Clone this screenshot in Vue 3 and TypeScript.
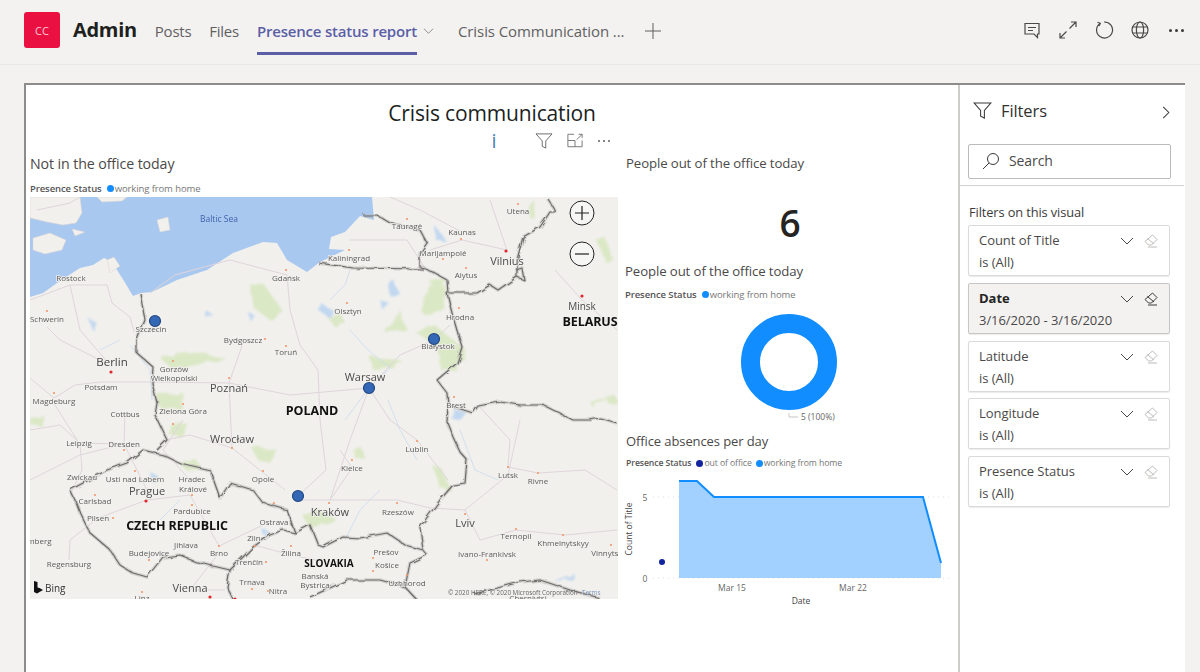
<script setup lang="ts">
interface MapLabel { t: string; x: number; y: number; k?: string }
const filters = [
  { name: 'Count of Title', value: 'is (All)', active: false },
  { name: 'Date', value: '3/16/2020 - 3/16/2020', active: true },
  { name: 'Latitude', value: 'is (All)', active: false },
  { name: 'Longitude', value: 'is (All)', active: false },
  { name: 'Presence Status', value: 'is (All)', active: false },
]
const sea = 'M30 197H372L374 220L360 216L345 232L331 237L329 249L345 250L320 262L307 272L287 260L277 243L263 242L233 253L207 270L177 280L152 292L141 293L133 296L124 281L112 262L104 258L93 265L80 268L57 283L43 293L30 297Z'
const land = [
  'M30 197H80L82 213L76 223L63 225L47 222L30 218Z',
  'M33 238L50 233L66 240L62 250L45 254L33 250Z',
  'M72 229L85 232L75 236Z',
  'M157 220L168 217L170 230L160 232Z',
  'M107 260L114 257L120 266L110 273Z',
  'M97 197H127L122 201L102 202Z',
]
const greens = [
  'M250 285L262 282L284 312L270 320L254 308Z',
  'M160 358L190 352L226 358L205 364L172 369Z',
  'M155 395L184 394L182 408L160 408Z',
  'M170 425L188 422L182 436L168 434Z',
  'M252 447L278 450L270 463L258 460Z',
  'M430 280L446 280L445 308L426 316L420 310Z',
  'M416 332L436 326L468 352L456 370L440 370L438 348Z',
  'M370 358L402 360L394 368L372 370Z',
  'M384 333L394 324L400 310L406 330Z',
  'M597 240L604 236L613 260L605 262Z',
  'M590 402L610 396L592 406Z',
  'M302 515L320 510L338 520L310 528Z',
  'M432 465L443 470L452 492L440 488Z',
  'M352 450L362 448L364 458L354 457Z',
  'M178 463L196 460L202 468L186 470Z',
  'M527 206L536 202L533 218L529 217Z',
  'M326 316L342 314L346 324L336 328Z',
  'M30 417L44 415L43 426L30 425Z',
  'M606 398L617 397L617 402L607 403Z',
]
const lakes = [
  'M88 318L96 322L92 330Z', 'M388 285L392 278L398 292L390 296Z', 'M322 304L333 310L328 316L320 312Z',
  'M205 310L212 314L206 318Z', 'M248 312L256 316L250 322Z', 'M455 410L468 412L461 422L452 419Z',
  'M555 582L575 574L572 580Z', 'M262 530L270 532L266 538Z', 'M150 472L158 476L152 482Z',
  'M435 225L445 240L436 240Z', 'M380 300L390 304L383 310Z',
]
const roads = [
  'M37 210L70 203L80 197',
  'M30 300L70 285L107 285L112 303L130 317L134 332',
  'M70 285L80 330L110 365',
  'M47 327L60 340L90 355L112 367',
  'M30 378L54 398L75 385L100 382L150 382L229 383L290 395L369 388',
  'M150 293L175 275L230 260L287 275',
  'M287 275L290 310L300 345L318 370L320 420L326 470L298 496',
  'M243 343L229 383L232 448L285 490',
  'M369 388L400 355L434 340L450 325',
  'M369 388L390 420L417 440L448 480',
  'M369 388L350 440L330 500',
  'M298 500L329 500L397 500L430 508L465 510L480 540L516 530L565 535L617 530',
  'M508 467L538 473L585 470L617 490',
  'M465 510L508 475L520 420',
  'M147 500L190 495L219 546L263 525',
  'M147 500L98 518L70 540L69 560',
  'M124 444L80 455L30 480',
  'M125 414L124 444L147 490',
  'M124 444L79 443L55 405',
  'M183 420L163 450L190 480',
  'M232 448L190 435L165 440',
  'M507 250L462 240L430 250',
  'M507 250L490 200',
  'M462 232L420 210L390 197',
  'M555 270L582 300L617 330',
  'M349 240L407 240L425 268',
  'M219 553L190 590L225 590',
  'M254 545L291 555L340 565',
  'M340 450L352 468L330 500',
  'M30 430L60 425L80 443L82 470L70 495',
  'M478 405L510 440L508 467',
]
const rivers = [
  'M350 330L368 350L390 368L369 388L345 420',
  'M417 460L400 430L388 400',
  'M330 300L345 285L350 270',
  'M130 345L150 370L152 400',
  'M100 350L120 340',
  'M460 430L475 470L498 480',
  'M345 540L360 510L380 490',
  'M160 520L180 500',
]
const borders = [
  'M140 293L145 320L137 340L137 353L153 367L152 383L157 403L155 415L167 440L157 450',
  'M70 490L75 500L80 513L90 533L110 550L120 565L133 573L147 577L163 557L180 555L200 563L230 570L253 547L270 535L283 530L295 533L287 510L263 503L253 490L230 483L220 498L210 470L180 463L163 455L143 450L127 463L107 470L85 482L70 490',
  'M295 533L310 525L318 545L323 547L343 537L360 538L387 533L405 545L423 550L427 555',
  'M427 555L410 563L405 587L417 600',
  'M230 570L227 587L233 599',
  'M310 597L330 588L347 580L380 580L405 587',
  'M448 405L447 422L453 437L460 452L467 460L465 483L453 485L440 500L420 527L423 550',
  'M473 413L478 406L500 402L520 405L543 405L573 420L590 420L600 418L617 423',
  'M448 405L473 413',
  'M447 293L453 317L462 347L457 363L437 380L447 393L448 405',
  'M425 268L447 280L448 293L477 293L490 285L498 290L517 277L517 260L523 237L540 227L550 212L556 212L547 198',
  'M318 263L353 268L423 269',
  'M363 215L377 215L390 223L420 230L427 243L420 253L420 267L425 268',
  'M517 277L524 280L522 268L516 270',
  'M474 594L490 590L520 582L540 580L570 590L600 598',
]
const labels: MapLabel[] = [
  { t: 'Baltic Sea', x: 219, y: 222, k: 'sea-l' },
  { t: 'Rostock', x: 71, y: 281 }, { t: 'Gdańsk', x: 286, y: 281 }, { t: 'Schwerin', x: 47, y: 322 },
  { t: 'Szczecin', x: 151, y: 332 }, { t: 'Bydgoszcz', x: 243, y: 343 }, { t: 'Toruń', x: 286, y: 355 },
  { t: 'Berlin', x: 112, y: 366, k: 'big' }, { t: 'Gorzów', x: 174, y: 372 }, { t: 'Wielkopolski', x: 174, y: 381 },
  { t: 'Poznań', x: 229, y: 392, k: 'mid' }, { t: 'Potsdam', x: 101, y: 390 }, { t: 'Magdeburg', x: 54, y: 404 },
  { t: 'Zielona Góra', x: 183, y: 414 }, { t: 'Cottbus', x: 125, y: 417 }, { t: 'Leipzig', x: 79, y: 446 },
  { t: 'Dresden', x: 124, y: 447 }, { t: 'Wrocław', x: 232, y: 443, k: 'mid' }, { t: 'Zwickau', x: 82, y: 480 },
  { t: 'Usti nad Labem', x: 135, y: 482 }, { t: 'Hradec', x: 192, y: 482 }, { t: 'Králové', x: 193, y: 492 },
  { t: 'Opole', x: 263, y: 482 }, { t: 'Prague', x: 147, y: 495, k: 'mid' }, { t: 'Carlsbad', x: 95, y: 504 },
  { t: 'Pardubice', x: 192, y: 514 }, { t: 'Pilsen', x: 98, y: 521 }, { t: 'Ostrava', x: 274, y: 525 },
  { t: 'Zlin', x: 254, y: 541 }, { t: 'Jihlava', x: 186, y: 548 }, { t: 'Brno', x: 219, y: 556 },
  { t: 'Budejovice', x: 149, y: 556 }, { t: 'Regensburg', x: 69, y: 567 }, { t: 'Trenčín', x: 249, y: 565 },
  { t: 'Žilina', x: 291, y: 556 }, { t: 'Vienna', x: 190, y: 592, k: 'mid' }, { t: 'Trnava', x: 252, y: 585 },
  { t: 'Nitra', x: 278, y: 594 }, { t: 'Nuremberg', x: 30, y: 544 }, { t: 'Utena', x: 518, y: 214 },
  { t: 'Tauragė', x: 407, y: 229 }, { t: 'Kaunas', x: 462, y: 235 }, { t: 'Marijampolė', x: 443, y: 256 },
  { t: 'Vilnius', x: 507, y: 265, k: 'mid' }, { t: 'Kaliningrad', x: 349, y: 261 }, { t: 'Alytus', x: 466, y: 278 },
  { t: 'Minsk', x: 582, y: 310, k: 'mid2' }, { t: 'Olsztyn', x: 348, y: 314 }, { t: 'Hrodna', x: 460, y: 320 },
  { t: 'Białystok', x: 438, y: 349 }, { t: 'Warsaw', x: 365, y: 381, k: 'mid' }, { t: 'Brest', x: 456, y: 408 },
  { t: 'Lublin', x: 417, y: 452 }, { t: 'Kielce', x: 352, y: 471 }, { t: 'Lutsk', x: 508, y: 478 },
  { t: 'Rivne', x: 538, y: 484 }, { t: 'Kraków', x: 330, y: 516, k: 'mid' }, { t: 'Rzeszów', x: 398, y: 515 },
  { t: 'Lviv', x: 465, y: 527, k: 'mid' }, { t: 'Ternopil', x: 516, y: 539 }, { t: 'Khmelnytskyy', x: 563, y: 546 },
  { t: 'Vinnytsia', x: 608, y: 556 }, { t: 'Ivano-Frankivsk', x: 487, y: 557 }, { t: 'Prešov', x: 386, y: 555 },
  { t: 'Košice', x: 387, y: 568 }, { t: 'Banská', x: 315, y: 579 }, { t: 'Bystrica', x: 315, y: 588 },
  { t: 'Uzhhorod', x: 407, y: 586 }, { t: 'Chernivtsi', x: 528, y: 601 }, { t: 'Linz', x: 142, y: 601 },
  { t: 'POLAND', x: 312, y: 415, k: 'country' }, { t: 'CZECH REPUBLIC', x: 177, y: 530, k: 'country' },
  { t: 'BELARUS', x: 590, y: 326, k: 'country' }, { t: 'SLOVAKIA', x: 329, y: 567, k: 'country-s' },
]
const dots = [
  [286, 270], [47, 311], [265, 339], [286, 346], [173, 361], [229, 378], [54, 393], [183, 404], [232, 448],
  [263, 471], [135, 471], [95, 495], [192, 505], [192, 495], [113, 518], [274, 503], [255, 546], [219, 546],
  [149, 560], [291, 546], [266, 562], [252, 589], [268, 591], [142, 592], [518, 204], [407, 219], [461, 239],
  [443, 259], [349, 250], [466, 268], [347, 303], [459, 308], [454, 397], [417, 441], [352, 460], [508, 467],
  [538, 473], [329, 503], [397, 503], [465, 514], [516, 529], [563, 535], [611, 545], [487, 560], [373, 558],
  [373, 571], [407, 575], [173, 424], [124, 450],
]
const redDots = [[111, 372], [146, 501], [210, 597], [235, 599], [506, 251], [582, 296]]
const markers = [[155, 321], [434, 339], [369, 388], [298, 496]]
</script>

<template>
  <div class="page">
    <header class="topbar">
      <div class="avatar">CC</div>
      <div class="team">Admin</div>
      <nav class="tabs">
        <span class="tab">Posts</span>
        <span class="tab">Files</span>
        <span class="tab active">Presence status report<i class="bar"></i></span>
        <svg class="tab-chev" viewBox="0 0 12 8"><path d="M1 1.5l5 5 5-5" /></svg>
        <span class="tab crisis">Crisis Communication ...</span>
        <svg class="plus" viewBox="0 0 16 16"><path d="M8 0v16M0 8h16" /></svg>
      </nav>
      <div class="actions">
        <svg viewBox="0 0 20 20"><path d="M3 3.500h14v10.500h-1.500v3.500l-3.500-3.500H3zM6 7.500h8M6 10.500h5" /></svg>
        <svg viewBox="0 0 20 20"><path d="M11.500 8.500L18 2M13 2h5v5M8.500 11.500L2 18M2 13v5h5" /></svg>
        <svg viewBox="0 0 20 20"><path d="M6 3.400A8 8 0 1 0 10 2M3.500 2.200L6.300 3.300 5 6" /></svg>
        <svg viewBox="0 0 20 20"><circle cx="10" cy="10" r="8" /><ellipse cx="10" cy="10" rx="3.600" ry="8" /><path d="M2.600 7h14.800M2.600 13h14.800" /></svg>
        <span class="more"><i></i><i></i><i></i></span>
      </div>
    </header>

    <main class="stage">
      <section class="report">
        <div class="canvas">
          <h1 class="title">Crisis communication</h1>
          <div class="vis-head">
            <span class="info">i</span>
            <svg class="vh-filter" viewBox="0 0 20 18"><path d="M1 1h18l-7 8v8l-4-2V9z" /></svg>
            <svg class="vh-expand" viewBox="0 0 18 16"><path d="M8 1H1v14h16V8M1 8h8v7M11 7l6-6M13 1h4v4" /></svg>
            <span class="vh-more"><i></i><i></i><i></i></span>
          </div>
          <div class="columns">
            <div class="col-map">
              <h2 class="v-title map-title">Not in the office today</h2>
              <div class="legend">
                <b>Presence Status</b><i class="dot light"></i><span>working from home</span>
              </div>
              <div class="map">
                <svg class="map-svg" viewBox="30 197 588 402">
                  <defs>
                    <filter id="wiggle" x="-5%" y="-5%" width="110%" height="110%">
                      <feTurbulence type="fractalNoise" baseFrequency="0.09" numOctaves="2" seed="4" />
                      <feDisplacementMap in="SourceGraphic" scale="5" />
                    </filter>
                    <filter id="soft" x="-10%" y="-10%" width="120%" height="120%">
                      <feTurbulence type="fractalNoise" baseFrequency="0.08" numOctaves="2" seed="9" />
                      <feDisplacementMap in="SourceGraphic" scale="8" />
                      <feGaussianBlur stdDeviation=".8" />
                    </filter>
                  </defs>
                  <rect x="30" y="197" width="588" height="402" fill="#f1f0ed" />
                  <path :d="sea" fill="#a9c8ef" />
                  <g class="coast">
                    <path v-for="(d, i) in land" :key="'l' + i" :d="d" fill="#f1f0ed" stroke="#d8d3d0" stroke-width=".5" />
                  </g>
                  <g class="soft">
                    <path v-for="(d, i) in greens" :key="'g' + i" :d="d" fill="#dbe8c6" />
                    <path v-for="(d, i) in lakes" :key="'k' + i" :d="d" fill="#c2d8f0" />
                  </g>
                  <path v-for="(d, i) in rivers" :key="'v' + i" :d="d" class="river" />
                  <path v-for="(d, i) in roads" :key="'r' + i" :d="d" class="road" />
                  <g class="wiggle">
                    <path v-for="(d, i) in borders" :key="'h' + i" :d="d" class="halo" />
                    <path v-for="(d, i) in borders" :key="'b' + i" :d="d" class="border" />
                  </g>
                  <circle v-for="(p, i) in dots" :key="'d' + i" :cx="p[0]" :cy="p[1]" r="1.100" fill="#f0986a" />
                  <circle v-for="(p, i) in redDots" :key="'e' + i" :cx="p[0]" :cy="p[1]" r="1.600" fill="#e0262c" />
                  <text v-for="l in labels" :key="l.t" :x="l.x" :y="l.y" class="ml" :class="l.k">{{ l.t }}</text>
                  <circle v-for="(p, i) in markers" :key="'m' + i" :cx="p[0]" :cy="p[1]" r="5.500" class="marker" />
                  <g class="zoomer">
                    <circle cx="582" cy="213" r="12" /><path d="M575 213h14M582 206v14" />
                    <circle cx="582" cy="254" r="12" /><path d="M575 254h14" />
                  </g>
                  <path d="M34 581v11l3 1.500 6-3.500-3.500-2-2-.5V582z" fill="#111" />
                  <text x="45" y="592" class="bing">Bing</text>
                  <text x="448" y="595" class="copy">© 2020 HERE, © 2020 Microsoft Corporation</text>
                  <text x="582" y="595" class="copy terms">Terms</text>
                </svg>
              </div>
            </div>

            <div class="col-side">
              <h2 class="v-title side-first">People out of the office today</h2>
              <div class="big-num">6</div>
              <h2 class="v-title side-second">People out of the office today</h2>
              <div class="legend second">
                <b>Presence Status</b><i class="dot light"></i><span>working from home</span>
              </div>
              <svg class="donut" viewBox="0 0 324 114">
                <circle cx="163" cy="51" r="38.500" />
                <path class="leader" d="M163 102v4h9" />
                <text x="175" y="109">5 (100%)</text>
              </svg>
              <h2 class="v-title side-third">Office absences per day</h2>
              <div class="legend third">
                <b>Presence Status</b><i class="dot navy"></i><span>out of office</span><i class="dot light"></i><span>working from home</span>
              </div>
              <svg class="area" viewBox="625 472 330 136">
                <path class="grid" d="M653 497H952M653 578H952" />
                <path class="fill" d="M679 481H697L714 497H923L941 563V578H679Z" />
                <path class="line" d="M679 481H697L714 497H923L941 563" />
                <circle cx="662" cy="562" r="3" fill="#12239e" />
                <text x="645" y="500.500" class="tick">5</text>
                <text x="645" y="581.500" class="tick">0</text>
                <text x="732" y="591" class="tick">Mar 15</text>
                <text x="853" y="591" class="tick">Mar 22</text>
                <text x="801" y="604" class="axis">Date</text>
                <text x="632" y="529" class="axis" transform="rotate(-90 632 529)">Count of Title</text>
              </svg>
            </div>
          </div>
        </div>

        <aside class="filters">
          <div class="f-head">
            <svg class="f-funnel" viewBox="0 0 20 18"><path d="M1 1h18l-7 8v8l-4-2V9z" /></svg>
            <span class="f-title">Filters</span>
            <svg class="f-chev" viewBox="0 0 8 14"><path d="M1 1l6 6-6 6" /></svg>
          </div>
          <div class="f-search-wrap">
            <div class="f-search">
              <svg viewBox="0 0 18 18"><circle cx="11" cy="7" r="5.500" /><path d="M7 11l-6 6" /></svg>
              <span>Search</span>
            </div>
          </div>
          <div class="f-list">
            <div class="f-sub">Filters on this visual</div>
            <div v-for="f in filters" :key="f.name" class="f-card" :class="{ on: f.active }">
              <div class="f-text">
                <div class="f-name">{{ f.name }}</div>
                <div class="f-val">{{ f.value }}</div>
              </div>
              <svg class="f-down" viewBox="0 0 14 8"><path d="M1 1l6 6 6-6" /></svg>
              <svg class="f-erase" viewBox="0 0 14 14"><path d="M8.500 1L13 5.500 7.500 11H4.500L1 7.500zM3.500 4.500L10 10M4 13h9" /></svg>
            </div>
          </div>
        </aside>
      </section>
    </main>
  </div>
</template>

<style>
html, body { margin: 0; background: #f3f2f1; }
</style>

<style scoped>
.page { width: 1200px; height: 672px; overflow: hidden; display: flex; flex-direction: column; background: #f3f2f1; font-family: "Open Sans", "Noto Sans", sans-serif; color: #3b3a39; }
.topbar { height: 64px; flex: none; display: flex; align-items: center; padding: 0 15px 0 24px; border-bottom: 1px solid #e9e8e7; box-sizing: content-box; position: relative; }
.avatar { width: 36px; height: 36px; margin-top: -4px; border-radius: 3px; background: #ea1042; color: #fbc9d4; font-size: 11px; display: flex; align-items: center; justify-content: center; }
.team { margin: -6px 0 0 13px; font-size: 20px; font-weight: 700; color: #201f1e; letter-spacing: -.3px; }
.tabs { display: flex; align-items: center; margin: -2px 0 0 18px; height: 64px; font-size: 15px; color: #616161; }
.tab { position: relative; letter-spacing: -.25px; white-space: nowrap; margin-right: 18px; }
.tab.active { color: #5b5fa6; font-weight: 600; margin-right: 6px; letter-spacing: -.2px; }
.bar { position: absolute; left: 0; right: 0; top: 31px; height: 3px; background: #5b5fa6; }
.tab-chev { width: 11px; height: 8px; fill: none; stroke: #8a8886; stroke-width: 1; margin-right: 24px; }
.tab.crisis { margin-right: 21px; letter-spacing: -.08px; }
.plus { width: 16px; height: 16px; fill: none; stroke: #605e5c; stroke-width: 1; }
.actions { margin-left: auto; display: flex; align-items: center; gap: 16px; margin-top: -4px; }
.actions svg { width: 20px; height: 20px; fill: none; stroke: #4a4948; stroke-width: 1.2; }
.more { display: flex; gap: 3px; width: 16px; margin-left: 3px; }
.more i { width: 3px; height: 3px; border-radius: 50%; background: #3b3a39; }
.stage { flex: 1; min-height: 0; padding: 18px 15px 0 24px; display: flex; }
.report { flex: 1; display: flex; background: #fff; border-top: 2px solid #8c8c8c; border-left: 2px solid #8c8c8c; }
.canvas { width: 932px; flex: none; box-sizing: border-box; display: flex; flex-direction: column; padding-top: 13px; }
.title { margin: 0; font-size: 21px; line-height: 30px; font-weight: 400; text-align: center; color: #201f1e; letter-spacing: -.15px; }
.vis-head { height: 25px; display: flex; align-items: center; margin-left: 463px; position: relative; }
.info { width: 10px; color: #4d7fb8; font-size: 20px; line-height: 25px; text-align: center; }
.vh-filter { width: 18px; height: 16px; margin-left: 36px; fill: none; stroke: #605e5c; stroke-width: 1; }
.vh-expand { width: 16px; height: 15px; margin-left: 14px; fill: none; stroke: #6f6d6b; stroke-width: 1; }
.vh-more { display: flex; gap: 3px; margin-left: 15px; }
.vh-more i { width: 2px; height: 2px; border-radius: 50%; background: #605e5c; }
.columns { display: flex; padding-left: 4px; }
.col-map { width: 588px; flex: none; }
.v-title { margin: 0; font-size: 13.200px; line-height: 20px; font-weight: 400; color: #4a4948; letter-spacing: -.1px; white-space: nowrap; }
.map-title { padding-top: 1px; font-size: 14.200px; }
.legend { display: flex; align-items: center; height: 12px; margin-top: 8px; font-size: 9.500px; color: #777; white-space: nowrap; letter-spacing: -.1px; }
.legend b { color: #555; font-weight: 600; margin-right: 5px; }
.legend span { margin-right: 4px; }
.legend.second { margin-top: 7px; margin-left: -1px; }
.legend.third { margin-top: 6px; font-size: 8.700px; }
.dot { width: 7px; height: 7px; border-radius: 50%; margin-right: 1px; flex: none; }
.dot.light { background: #118dff; }
.dot.navy { background: #12239e; }
.map { margin-top: 3px; height: 402px; }
.map-svg { display: block; width: 588px; height: 402px; filter: blur(.3px); }
.soft { filter: url(#soft); }
.wiggle { filter: url(#wiggle); }
.road { fill: none; stroke: #dfd5db; stroke-width: 1; }
.river { fill: none; stroke: #c9dbee; stroke-width: .8; }
.halo { fill: none; stroke: #b5b2ae; stroke-width: 3.500; opacity: .5; stroke-linejoin: round; }
.border { fill: none; stroke: #6d6d6b; stroke-width: 1.200; stroke-linejoin: round; }
.ml { font-size: 8px; fill: #5c5c5c; text-anchor: middle; paint-order: stroke; stroke: #f1f0ed; stroke-width: 1.500px; }
.ml.mid { font-size: 11px; fill: #4b4b4b; }
.ml.mid2 { font-size: 10px; fill: #4b4b4b; }
.ml.big { font-size: 11.500px; fill: #444; }
.ml.country { font-size: 12.500px; font-weight: 700; fill: #111; letter-spacing: -.1px; }
.ml.country-s { font-size: 10px; font-weight: 700; fill: #111; }
.ml.sea-l { font-size: 8.500px; fill: #3f63ad; stroke: none; }
.marker { fill: #3467b5; stroke: #24477f; stroke-width: 1.200; }
.zoomer circle { fill: #f6f6f5; stroke: #222; stroke-width: 1; }
.zoomer path { fill: none; stroke: #222; stroke-width: 1.200; }
.bing { font-size: 10px; fill: #333; }
.copy { font-size: 6.300px; fill: #666; }
.terms { fill: #7d93bd; }
.col-side { margin-left: 8px; flex: 1; min-width: 0; }
.side-first { margin-top: 0; }
.big-num { text-align: center; margin: 24px 0 0 -4px; height: 62px; font-size: 37px; font-weight: 600; line-height: 52px; color: #252423; }
.side-second { margin-left: -1px; padding-top: 2px; }
.donut { display: block; width: 324px; height: 114px; margin-top: 11px; overflow: visible; }
.donut circle { fill: none; stroke: #118dff; stroke-width: 19; }
.leader { fill: none; stroke: #c8c6c4; stroke-width: 1; }
.donut text { font-size: 8.500px; fill: #666; }
.side-third { margin-top: 6px; font-size: 13px; }
.area { display: block; width: 330px; height: 136px; margin: 3px 0 0 -1px; overflow: visible; }
.grid { stroke: #dcdcdc; stroke-width: 1; stroke-dasharray: 1 4; fill: none; }
.fill { fill: #a3d1ff; }
.line { fill: none; stroke: #118dff; stroke-width: 2; }
.tick { font-size: 8.500px; fill: #666; text-anchor: middle; }
.axis { font-size: 8.500px; fill: #444; text-anchor: middle; }
.filters { width: 226px; flex: none; box-sizing: border-box; border-left: 2px solid #cfcdca; display: flex; flex-direction: column; }
.f-head { height: 59px; box-sizing: border-box; padding: 0 0 8px 13px; display: flex; align-items: center; position: relative; flex: none; }
.f-funnel { width: 19px; height: 17px; fill: none; stroke: #3b3a39; stroke-width: 1.100; }
.f-title { margin-left: 9px; font-size: 16.500px; letter-spacing: -.1px; color: #323130; }
.f-chev { width: 8px; height: 13px; position: absolute; right: 14px; top: 21px; fill: none; stroke: #3b3a39; stroke-width: 1.100; }
.f-search-wrap { padding: 0 13px 6px 8px; border-bottom: 1px solid #d2d0ce; flex: none; }
.f-search { height: 35px; box-sizing: border-box; border: 1px solid #bdbbb9; border-radius: 2px; display: flex; align-items: center; padding: 0 0 2px 13px; font-size: 14px; color: #4a4948; letter-spacing: -.1px; }
.f-search svg { width: 18px; height: 18px; margin-right: 9px; fill: none; stroke: #3b3a39; stroke-width: 1; }
.f-list { padding: 0 13px 0 8px; }
.f-sub { margin: 17px 0 0 1px; height: 22px; font-size: 12.800px; line-height: 18px; color: #3b3a39; letter-spacing: -.1px; }
.f-card { height: 51px; box-sizing: border-box; border: 1px solid #dcdad8; border-radius: 2px; box-shadow: 0 1px 1px rgba(0,0,0,.08); margin: 0 1px 6.750px 0; display: flex; padding: 3px 11px 0 10px; }
.f-card.on { background: #f3f2f1; border-color: #c8c6c4; }
.f-text { flex: 1; font-size: 13px; line-height: 22px; color: #4a4948; letter-spacing: -.05px; }
.f-card.on .f-name { font-weight: 700; color: #252423; }
.f-down { width: 14px; height: 8px; margin: 8px 10px 0 0; fill: none; stroke: #4a4948; stroke-width: 1; }
.f-erase { width: 14px; height: 14px; margin-top: 5px; fill: none; stroke: #bdbbb9; stroke-width: 1; }
.f-card.on .f-erase { stroke: #3b3a39; }
</style>
